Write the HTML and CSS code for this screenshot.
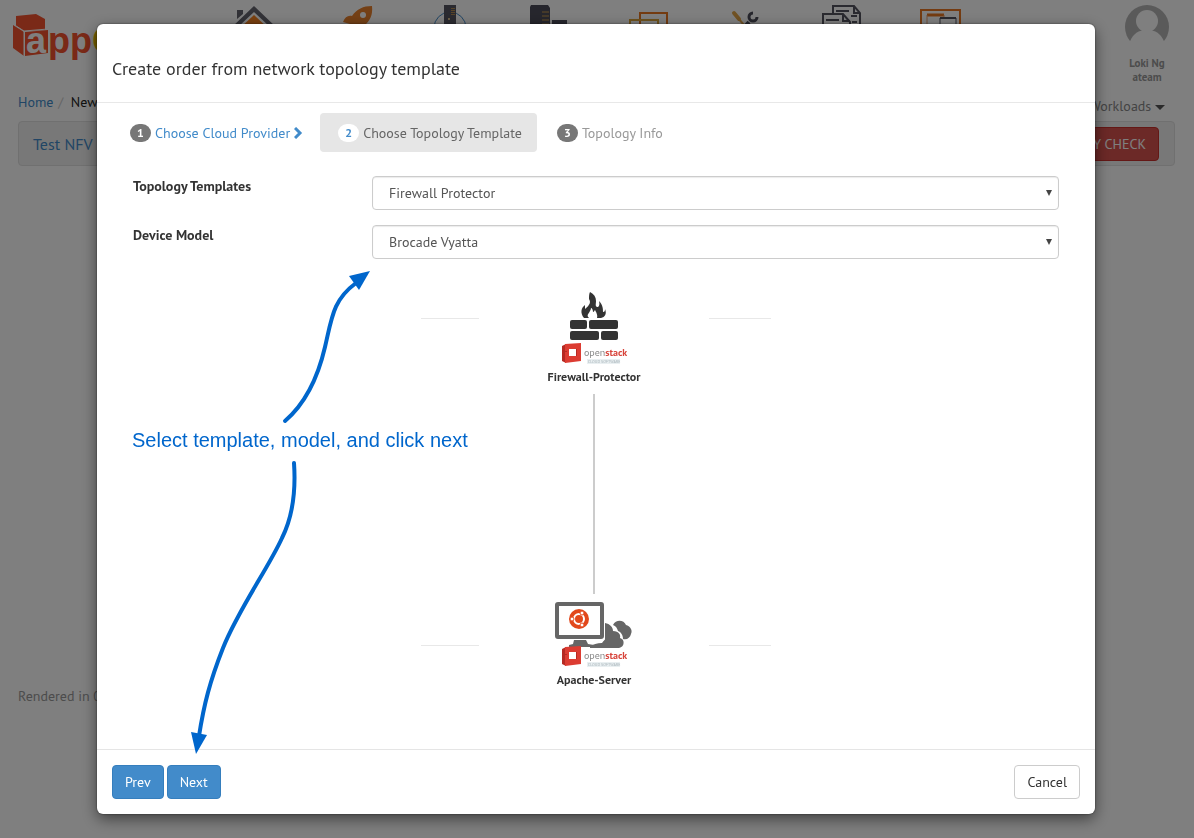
FILE: index.html
```html
<!DOCTYPE html>
<html lang="en">
<head>
    <meta charset="UTF-8">
    <meta name="viewport" content="width=device-width, initial-scale=1.0">
    <title>Create order</title>
    <link rel="stylesheet" href="styles.css">
</head>
<body>
    <div class="page">
        <header class="topbar">
            <svg class="logo" width="120" height="60" viewBox="0 0 120 60">
                <path fill="#f4532f" d="M16 16l20-2 9 5v11l-21 1-8-5z"/>
                <path fill="#f4532f" d="M13 25l11 7v24l-11-8z"/>
                <path fill="#f4532f" d="M25 32l23-2v23l-23 3z"/>
                <path fill="none" stroke="#fff" stroke-width="1" d="M13 24l11 7 24-2M24 31v25"/>
                <text class="logo-a" x="26" y="53">a</text>
                <text class="logo-pp" x="48" y="53">pp</text>
                <text class="logo-o" x="92" y="53">O</text>
            </svg>
            <nav class="nav">
                <a href="#" aria-label="Home"><svg width="44" height="44" viewBox="0 0 44 44"><path fill="#64646e" d="M5 10h6v4l-6 5zM22 6l22 21h-6L22 12 6 27H0z"/><path fill="#f58220" d="M22 15l14 13v14H8V28z"/></svg></a>
                <a href="#" aria-label="Launch"><svg width="44" height="44" viewBox="0 0 44 44"><path fill="#e8802c" d="M42 6c-9 0-15 3-20 10-4-1-7 1-9 6l7 2 6 6 3 6c5-3 6-6 5-10 6-5 9-11 8-20z"/><circle cx="33" cy="15" r="3" fill="#fff"/></svg></a>
                <a href="#" aria-label="Services"><svg width="44" height="44" viewBox="0 0 44 44"><circle cx="22" cy="28" r="16" fill="none" stroke="#428bca" stroke-width="1"/><rect x="16" y="5" width="12" height="30" fill="#555560"/><path stroke="#b08850" stroke-width="4" stroke-dasharray="1 1" d="M25 8v8"/><circle cx="21" cy="19" r="1" fill="#fd9"/></svg></a>
                <a href="#" aria-label="Storage"><svg width="44" height="44" viewBox="0 0 44 44"><path fill="#4d4d5a" d="M5 5h17l2 3v30H4V7zM26 20h15v18H26z"/><path stroke="#c79a4d" stroke-width="1" d="M16 12h7M16 16h7M16 20h7M16 24h7"/></svg></a>
                <a href="#" aria-label="Workspaces"><svg width="44" height="44" viewBox="0 0 44 44"><rect x="16" y="13" width="27" height="22" fill="none" stroke="#e87722" stroke-width="2"/><rect x="6" y="20" width="28" height="18" fill="none" stroke="#dca53c" stroke-width="2"/></svg></a>
                <a href="#" aria-label="Tools"><svg width="44" height="44" viewBox="0 0 44 44"><path stroke="#e0a448" stroke-width="4" stroke-linecap="round" d="M12 13l5 6"/><path stroke="#e0a448" stroke-width="2" d="M16 18l12 14"/><path stroke="#4d4d5a" stroke-width="4" d="M16 34l11-12"/><path fill="none" stroke="#4d4d5a" stroke-width="3" d="M31 13a4 4 0 1 0 4 4"/></svg></a>
                <a href="#" aria-label="Documents"><svg width="44" height="44" viewBox="0 0 44 44"><path fill="#fff" stroke="#555560" stroke-width="2" d="M13 14V6h21l6 7v20H13M34 6v7h6M3 36V14h20l7 8v14zM23 14v7h7"/><path stroke="#555560" stroke-width="2" d="M16 11h13M6 20h13M31 16h6M32 22h5"/></svg></a>
                <a href="#" aria-label="Windows"><svg width="44" height="44" viewBox="0 0 44 44"><rect x="3" y="10" width="39" height="30" fill="none" stroke="#e87722" stroke-width="2"/><path stroke="#e87722" stroke-width="3" d="M9 15h17"/><path fill="none" stroke="#e8a070" d="M9 15v16M26 15v3"/><path stroke="#555560" stroke-width="2" d="M22 18h16"/><path fill="none" stroke="#555560" d="M22 18v14M38 18v14"/></svg></a>
            </nav>
            <div class="user">
                <svg width="46" height="46" viewBox="0 0 46 46"><clipPath id="face"><path d="M0 0h46v37H0z"/></clipPath><g clip-path="url(#face)"><circle cx="23" cy="23" r="22" fill="#b4b4b4"/><circle cx="23" cy="17" r="11" fill="#fff"/><path fill="#fff" d="M5 40c3-9 8-14 18-14s15 5 18 14z"/></g></svg>
                <span>Loki Ng</span>
                <span>ateam</span>
            </div>
        </header>
        <div class="crumbs">
            <div><a href="#">Home</a> <span class="slash">/</span> New</div>
            <a href="#" class="workloads">Workloads <span class="caret"></span></a>
        </div>
        <div class="panel">
            <a href="#">Test NFV</a>
            <button class="check">POLICY CHECK</button>
        </div>
        <footer class="rendered">Rendered in 0</footer>
    </div>

    <div class="backdrop">
        <div class="modal" role="dialog" aria-labelledby="title">
            <div class="modal-header">
                <h4 id="title">Create order from network topology template</h4>
            </div>
            <div class="modal-body">
                <div class="steps">
                    <a href="#" class="step done"><span class="badge">1</span>Choose Cloud Provider <svg width="9" height="12" viewBox="0 0 9 12"><path fill="none" stroke="#428bca" stroke-width="3" d="M1 1l5 5-5 5"/></svg></a>
                    <a href="#" class="step active"><span class="badge">2</span>Choose Topology Template</a>
                    <a href="#" class="step"><span class="badge">3</span>Topology Info</a>
                </div>
                <div class="form">
                    <label for="template">Topology Templates</label>
                    <div class="select">
                        <select id="template"><option>Firewall Protector</option></select>
                    </div>
                    <label for="model">Device Model</label>
                    <div class="select">
                        <select id="model"><option>Brocade Vyatta</option></select>
                    </div>
                </div>
                <div class="topology">
                    <div class="tier first">
                        <hr>
                        <div class="node">
                            <svg width="80" height="74" viewBox="0 0 80 74">
                                <path fill="#333" d="M30 27c-4-5-3-10 1-13v4c5-4 6-7 4-10 0-3 0-5 1-7 4 2 6 5 6 9 0 3-1 5 1 6 2 0 3-2 2-6 4 4 4 8 4 11 2 0 2-2 2-3 2 5 0 8-4 9h-4c1-3-1-6-2-8-1 1-1 2-2 2 0-2-1-4-2-4 0 4-6 7-2 10z"/>
                                <rect x="16" y="29" width="17" height="9" rx="2" fill="#333"/>
                                <rect x="35" y="29" width="29" height="9" rx="2" fill="#333"/>
                                <rect x="16" y="40" width="29" height="9" rx="2" fill="#333"/>
                                <rect x="47" y="40" width="17" height="9" rx="2" fill="#333"/>
                                <g id="openstack">
                                    <path fill="#b52a23" d="M8 55l4-2v19l-4-2z"/>
                                    <path fill="#dc3c32" d="M11 53l16-1v18l-16 2z"/>
                                    <path fill="#fff" d="M15 58h8v7h-8z"/>
                                    <path fill="#b52a23" d="M8 60h5v1H8zM22 58h1v7h-1z"/>
                                    <path fill="#e9eff1" d="M33 68h33v5H33z"/>
                                    <text class="os-name" x="30" y="65"><tspan fill="#888">open</tspan><tspan fill="#d8453c" font-weight="bold">stack</tspan></text>
                                    <text class="os-sub" x="34" y="72">CLOUD SOFTWARE</text>
                                </g>
                            </svg>
                            <span>Firewall-Protector</span>
                        </div>
                        <hr>
                    </div>
                    <div class="tier">
                        <div class="link"></div>
                    </div>
                    <div class="tier">
                        <hr>
                        <div class="node">
                            <svg width="80" height="67" viewBox="0 0 80 67">
                                <path fill="#666" d="M36 46c3-3 7-4 12-4l3-4V22c5 1 8 4 8 8 6 0 8 4 7 7 5 1 5 9-1 10H36z"/>
                                <path fill="#666" d="M59 24c3-6 11-5 13 0 4 1 7 5 5 9-1 4-4 6-8 5 0-4-2-7-5-8-1-3-2-5-5-6z"/>
                                <rect x="1" y="1" width="50" height="39" rx="3" fill="#fff"/>
                                <rect x="3" y="3" width="45" height="33" rx="1" fill="#fff" stroke="#666" stroke-width="4"/>
                                <path fill="#666" d="M20 39h12l2 4 6 1v2H15v-2l4-1z"/>
                                <circle cx="25" cy="18" r="10" fill="#e2481c"/>
                                <circle cx="25" cy="18" r="5" fill="none" stroke="#fff" stroke-width="2"/>
                                <g fill="#fff" stroke="#e2481c"><circle cx="18" cy="18" r="2"/><circle cx="28" cy="12" r="2"/><circle cx="28" cy="24" r="2"/></g>
                                <use href="#openstack" y="-7"/>
                            </svg>
                            <span>Apache-Server</span>
                        </div>
                        <hr>
                    </div>
                </div>
            </div>
            <div class="modal-footer">
                <div class="buttons">
                    <button class="btn primary">Prev</button>
                    <button class="btn primary">Next</button>
                </div>
                <button class="btn">Cancel</button>
            </div>
            <!-- hint drawn over the dialog -->
            <div class="hint">
                <svg width="240" height="150" viewBox="0 0 240 150"><path class="curve" d="M153 150C174 132 186 106 193 76C200 46 201 29 224 12"/><path class="head" d="M238 0l-21 5 10 14z"/></svg>
                <p>Select template, model, and click next</p>
                <svg width="240" height="294" viewBox="0 0 240 294"><path class="curve" d="M162 3C164 32 161 56 150 78C137 107 106 150 91 188C78 221 72 244 67 276"/><path class="head" d="M64 294l-5-22 16 3z"/></svg>
            </div>
        </div>
    </div>
</body>
</html>
```
FILE: styles.css
```css
* {
    box-sizing: border-box;
}
body {
    margin: 0;
    font-family: "PT Sans", "Noto Sans", sans-serif;
    font-size: 14px;
    line-height: 20px;
    color: #333;
    background: #fff;
}
a {
    color: #428bca;
    text-decoration: none;
}
button, select {
    font: inherit;
}
.page {
    padding: 0 19px 0 18px;
    height: 100vh;
    overflow: hidden;
}
.topbar {
    display: flex;
    align-items: flex-start;
    height: 92px;
    margin: 0 0 0 -18px;
}
.logo-a, .logo-pp, .logo-o {
    font-family: "Liberation Sans", Arial, sans-serif;
    font-weight: bold;
    font-size: 36px;
}
.logo-a {
    fill: #fff;
}
.logo-pp {
    fill: #f4532f;
}
.logo-o {
    fill: #f0c000;
}
.nav {
    flex: 1;
    display: flex;
    padding: 0 90px 0 85px;
}
.nav a {
    flex: 1;
    display: flex;
    justify-content: center;
}
.user {
    display: flex;
    flex-direction: column;
    align-items: center;
    width: 136px;
    margin-right: -40px;
    padding-top: 4px;
    font-size: 11px;
    line-height: 14px;
    font-weight: bold;
    color: #999;
}
.user svg {
    margin-bottom: 6px;
}
.crumbs {
    display: flex;
    justify-content: space-between;
    color: #222;
    height: 29px;
}
.slash {
    color: #ccc;
    margin: 0 4px 0 1px;
}
.workloads {
    color: #888;
    padding: 4px 10px 0 0;
}
.caret {
    display: inline-block;
    border: 5px solid transparent;
    border-top-color: #555;
    border-bottom: 0;
    vertical-align: middle;
}
.panel {
    display: flex;
    justify-content: space-between;
    align-items: center;
    height: 45px;
    padding: 0 15px 0 14px;
    font-size: 16px;
    background: #f0f0f0;
    border: 1px solid #e0e0e0;
    border-radius: 4px;
}
.check {
    height: 34px;
    padding: 0 12px;
    font-size: 14px;
    color: #fff;
    background: #d9534f;
    border: 1px solid #c9302c;
    border-radius: 4px;
}
.rendered {
    margin-top: 520px;
    color: #999;
}

.backdrop {
    position: fixed;
    inset: 0;
    padding: 24px 99px 24px 97px;
    background: rgba(0, 0, 0, 0.5);
}
.modal {
    position: relative;
    background: #fff;
    border-radius: 6px;
    box-shadow: 0 5px 15px rgba(0, 0, 0, 0.5), 0 0 2px rgba(0, 0, 0, 0.6);
}
.modal-header {
    padding: 32px 15px 20px;
    border-bottom: 1px solid #e8e8e8;
}
.modal-header h4 {
    margin: 0;
    font-size: 18px;
    line-height: 26px;
    font-weight: normal;
}
.modal-body {
    padding: 10px 15px 59px;
}
.steps {
    display: flex;
    gap: 2px;
}
.step {
    display: flex;
    align-items: center;
    gap: 4px;
    height: 39px;
    padding: 0 15px 0 18px;
    border-radius: 4px;
    color: #999;
}
.step.done {
    color: #428bca;
}
.step.active {
    color: #666;
    background: #e6e6e6;
}
.badge {
    width: 21px;
    height: 18px;
    border-radius: 9px;
    text-align: center;
    font-size: 12px;
    line-height: 18px;
    font-weight: bold;
    color: #fff;
    background: #777;
}
.step.active .badge {
    color: #428bca;
    background: #fff;
}
.form {
    display: grid;
    grid-template-columns: 239px 1fr;
    row-gap: 15px;
    padding: 24px 21px 0;
}
.form label {
    font-weight: bold;
}
.select {
    position: relative;
}
.select select {
    display: block;
    width: 100%;
    height: 34px;
    padding: 0 16px;
    color: #555;
    background: #fff;
    border: 1px solid #ccc;
    border-radius: 4px;
    box-shadow: inset 0 1px 1px rgba(0, 0, 0, 0.08);
    appearance: none;
}
.select::after {
    content: "";
    position: absolute;
    right: 7px;
    top: 14px;
    border: 3px solid transparent;
    border-top: 6px solid #444;
    border-bottom: 0;
}
.topology {
    padding-top: 32px;
}
.tier {
    display: grid;
    grid-template-columns: 58px 230px 62px;
    justify-content: center;
    align-items: center;
}
.tier hr {
    width: 100%;
    height: 1px;
    margin: 0;
    border: 0;
    background: #e8e8e8;
}
.tier.first {
    align-items: start;
}
.tier.first hr {
    margin-top: 27px;
}
.node {
    display: flex;
    flex-direction: column;
    align-items: center;
    gap: 2px;
    font-size: 12px;
    font-weight: bold;
}
.os-name {
    font-size: 10px;
    font-weight: normal;
}
.os-sub {
    font-size: 4px;
    font-weight: normal;
    fill: #a8b4ba;
}
.link {
    grid-column: 2;
    width: 2px;
    height: 200px;
    margin: 7px auto;
    background: #ccc;
}
.modal-footer {
    display: flex;
    justify-content: space-between;
    padding: 15px;
    border-top: 1px solid #e5e5e5;
}
.buttons {
    display: flex;
    gap: 3px;
}
.btn {
    height: 34px;
    padding: 0 12px;
    color: #333;
    background: #fff;
    border: 1px solid #ccc;
    border-radius: 4px;
}
.btn.primary {
    color: #fff;
    background: #428bca;
    border-color: #357ebd;
}
.hint {
    position: absolute;
    left: 35px;
    top: 247px;
    pointer-events: none;
}
.hint svg {
    display: block;
    overflow: visible;
}
.hint p {
    margin: 6px 0 7px;
    font-family: "Liberation Sans", Arial, sans-serif;
    font-size: 20px;
    line-height: 26px;
    color: #06c;
}
.curve {
    fill: none;
    stroke: #06c;
    stroke-width: 4;
    stroke-linecap: round;
}
.head {
    fill: #06c;
}
```
